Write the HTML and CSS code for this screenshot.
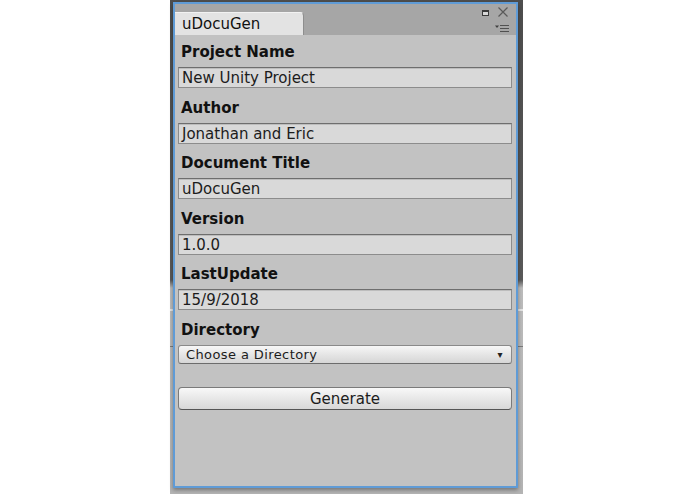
FILE: index.html
```html
<!DOCTYPE html>
<html>
<head>
<meta charset="utf-8">
<link rel="stylesheet" href="styles.css">
</head>
<body>
<div class="backdrop">
  <div class="panel">
    <div class="header">
      <div class="tab">uDocuGen</div>
      <svg class="win-icons" width="36" height="30" viewBox="0 0 36 30">
        <rect x="3.5" y="6.5" width="6" height="5" fill="#d8d8d8" stroke="#3a3a3a" stroke-width="1"/>
        <rect x="3" y="6" width="7" height="2" fill="#3a3a3a"/>
        <path d="M19.5 3.5 L28.5 12.5 M28.5 3.5 L19.5 12.5" stroke="#5a5a5a" stroke-width="1.2" fill="none"/>
        <path d="M16 21.5 L20 21.5 L18 24 Z" fill="#404040"/>
        <path d="M21 21.5 H30 M21 24.5 H30 M21 27.5 H30" stroke="#505050" stroke-width="1.2"/>
      </svg>
    </div>
    <div class="content">
      <div class="label">Project Name</div>
      <div class="field">New Unity Project</div>
      <div class="label">Author</div>
      <div class="field">Jonathan and Eric</div>
      <div class="label">Document Title</div>
      <div class="field">uDocuGen</div>
      <div class="label">Version</div>
      <div class="field">1.0.0</div>
      <div class="label">LastUpdate</div>
      <div class="field">15/9/2018</div>
      <div class="label">Directory</div>
      <div class="dropdown"><span>Choose a Directory</span><span class="arrow">▾</span></div>
      <div class="button">Generate</div>
    </div>
  </div>
</div>
</body>
</html>
```
FILE: styles.css
```css
html, body {
  margin: 0;
  padding: 0;
  background: #ffffff;
}
body {
  width: 695px;
  height: 494px;
  overflow: hidden;
  font-family: "DejaVu Sans", Verdana, sans-serif;
}
.backdrop {
  margin-left: 170px;
  width: 353px;
  height: 494px;
  box-sizing: border-box;
  padding: 2px 5px 6px 3px;
  background:
    linear-gradient(to bottom, transparent 309px, #e4e4e4 309px, #e4e4e4 311px, transparent 311px, transparent 346px, #7a7a7a 346px, #7a7a7a 347px, transparent 347px),
    linear-gradient(to bottom, #4e4e4e 0, #5a5a5a 280px, #bcbcbc 288px, #b4b4b4 494px);
}
.panel {
  height: 100%;
  box-sizing: border-box;
  border: 2px solid #5f9bd6;
  box-shadow: 0 2px 4px rgba(0,0,0,0.35);
  background: #c2c2c2;
  display: flex;
  flex-direction: column;
}
.header {
  height: 31px;
  background: #a6a6a6;
  display: flex;
  justify-content: space-between;
  align-items: flex-start;
  flex-shrink: 0;
}
.tab {
  margin-top: 8px;
  width: 129px;
  height: 23px;
  box-sizing: border-box;
  background: #e3e3e3;
  border-top: 1px solid #f2f2f2;
  border-right: 1px solid #8e8e8e;
  border-radius: 0 4px 0 0;
  padding-left: 7px;
  font-size: 15px;
  line-height: 23px;
  color: #111;
}
.win-icons {
  margin-right: 1px;
}
.content {
  padding: 0 4px 0 3px;
  display: flex;
  flex-direction: column;
}
.label {
  height: 32px;
  line-height: 34px;
  padding-left: 3px;
  font-size: 15px;
  font-weight: bold;
  color: #111;
}
.field {
  height: 21px;
  box-sizing: border-box;
  margin-bottom: 2.5px;
  background: #d9d9d9;
  border: 1px solid #8c8c8c;
  border-top-color: #6e6e6e;
  box-shadow: inset 0 1px 0 #bdbdbd;
  padding-left: 3px;
  font-size: 15px;
  line-height: 21px;
  color: #1c1c1c;
  white-space: nowrap;
}
.dropdown {
  height: 19px;
  box-sizing: border-box;
  border: 1px solid #8a8a8a;
  border-bottom-color: #6c6c6c;
  border-radius: 3px;
  background: linear-gradient(to bottom, #f7f7f7, #e2e2e2 60%, #d6d6d6);
  display: flex;
  justify-content: space-between;
  align-items: center;
  padding: 1px 8px 0 7px;
  font-size: 13px;
  letter-spacing: 0.4px;
  color: #1c1c1c;
}
.arrow {
  font-size: 10px;
  color: #222;
}
.button {
  margin-top: 23px;
  height: 23px;
  box-sizing: border-box;
  border: 1px solid #7a7a7a;
  border-bottom-color: #555;
  border-radius: 4px;
  background: linear-gradient(to bottom, #f8f8f8, #e6e6e6 55%, #d8d8d8);
  text-align: center;
  font-size: 15px;
  line-height: 23px;
  color: #1c1c1c;
}
```
